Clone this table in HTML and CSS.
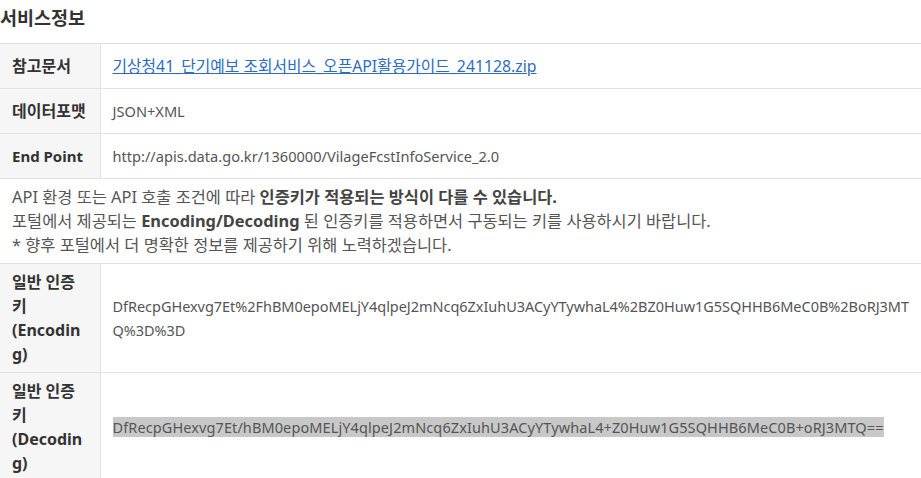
FILE: index.html
```html
<!DOCTYPE html>
<html lang="ko">
<head>
  <meta charset="UTF-8" />
  <meta name="viewport" content="width=device-width, initial-scale=1.0" />
  <title>서비스정보</title>
  <link rel="stylesheet" href="styles.css">
</head>
<body>
  <div class="section">
    <h2>서비스정보</h2>
    <table class="info">
      <colgroup>
        <col class="label-col">
        <col>
      </colgroup>
      <tbody>
        <tr>
          <th>참고문서</th>
          <td><a href="#">기상청41_단기예보 조회서비스_오픈API활용가이드_241128.zip</a></td>
        </tr>
        <tr>
          <th>데이터포맷</th>
          <td class="latin">JSON+XML</td>
        </tr>
        <tr>
          <th class="th-en">End Point</th>
          <td class="latin">http://apis.data.go.kr/1360000/VilageFcstInfoService_2.0</td>
        </tr>
        <tr>
          <td class="notice" colspan="2">
            API 환경 또는 API 호출 조건에 따라 <b>인증키가 적용되는 방식이 다를 수 있습니다.</b><br>
            포털에서 제공되는 <b>Encoding/Decoding</b> 된 인증키를 적용하면서 구동되는 키를 사용하시기 바랍니다.<br>
            * 향후 포털에서 더 명확한 정보를 제공하기 위해 노력하겠습니다.
          </td>
        </tr>
        <tr>
          <th>일반 인증키<br>(Encoding)</th>
          <td class="key key-enc">DfRecpGHexvg7Et%2FhBM0epoMELjY4qlpeJ2mNcq6ZxIuhU3ACyYTywhaL4%2BZ0Huw1G5SQHHB6MeC0B%2BoRJ3MTQ%3D%3D</td>
        </tr>
        <tr>
          <th>일반 인증키<br>(Decoding)</th>
          <td class="key"><span class="selected">DfRecpGHexvg7Et/hBM0epoMELjY4qlpeJ2mNcq6ZxIuhU3ACyYTywhaL4+Z0Huw1G5SQHHB6MeC0B+oRJ3MTQ==</span></td>
        </tr>
      </tbody>
    </table>
  </div>
</body>
</html>
```

FILE: styles.css
```css
body {
  margin: 0;
  font-family: "Noto Sans", "Noto Sans CJK KR", sans-serif;
  font-size: 16.4px;
  color: #555;
  background: #fff;
}
h2 {
  margin: 5px 0 12px;
  font-size: 18.5px;
  font-weight: bold;
  color: #333;
  line-height: 26px;
}
.info {
  width: 100%;
  table-layout: fixed;
  border-collapse: collapse;
  border-top: 1px solid #dedede;
}
.label-col {
  width: 100px;
}
.info th, .info td {
  border-bottom: 1px solid #e2e2e2;
  padding: 6px 12px;
  height: 32px;
  line-height: 24px;
  text-align: left;
  vertical-align: middle;
}
.info th {
  background: #f6f6f6;
  border-right: 1px solid #e2e2e2;
  color: #333;
  font-size: 16px;
  font-weight: bold;
  word-break: break-all;
}
.info th.th-en {
  font-size: 15px;
  white-space: nowrap;
}
.info td a {
  color: #2b6cc4;
  font-size: 15.8px;
}
.latin {
  font-size: 14.6px;
}
.notice b {
  color: #444;
}
.key {
  font-size: 14.5px;
  letter-spacing: 0.1px;
  word-break: break-all;
}
.key-enc {
  letter-spacing: -0.04px;
}
.info td.key {
  padding-right: 0;
}
.selected {
  background: #c8c8c8;
}
```
